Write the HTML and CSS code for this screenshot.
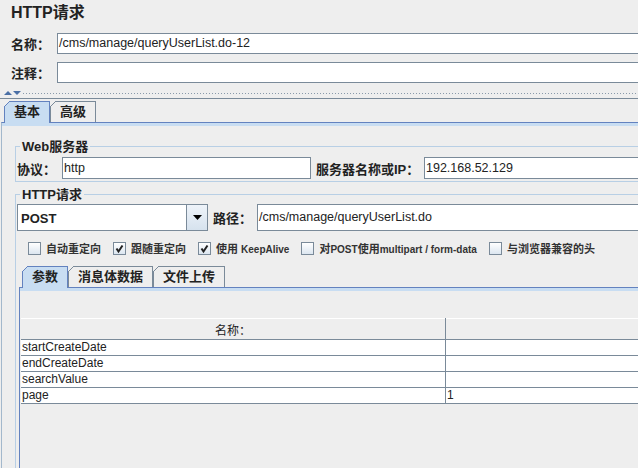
FILE: index.html
```html
<!DOCTYPE html>
<html>
<head>
<meta charset="utf-8">
<link rel="stylesheet" href="styles.css">
</head>
<body>
<div class="root">
  <div class="canvas">
    <div class="head">
      <div class="title">HTTP请求</div>
      <div class="rows">
        <div class="row"><span class="lbl">名称：</span><div class="field">/cms/manage/queryUserList.do-12</div></div>
        <div class="row"><span class="lbl">注释：</span><div class="field"></div></div>
      </div>
    </div>
    <div class="divider">
      <svg class="arrows" width="18" height="6" viewBox="0 0 18 6">
        <polygon points="0,5 4,1 8,5" fill="#4a6fa5"/>
        <polygon points="9,1 17,1 13,5" fill="#4a6fa5"/>
      </svg>
      <div class="dots"></div>
    </div>
    <div class="lower">
      <div class="tabs">
        <div class="tab sel">基本</div>
        <div class="tab">高级</div>
      </div>
      <div class="pane">
        <fieldset class="group web">
          <legend>Web服务器</legend>
          <div class="srow">
            <span class="lbl2">协议：</span>
            <div class="field proto">http</div>
            <span class="lbl3">服务器名称或IP：</span>
            <div class="field grow">192.168.52.129</div>
          </div>
        </fieldset>
        <fieldset class="group http">
          <legend>HTTP请求</legend>
          <div class="crow">
            <div class="combo">
              <span class="combo-text">POST</span>
              <span class="combo-btn"><svg width="9" height="5" viewBox="0 0 9 5"><polygon points="0,0 9,0 4.5,5" fill="#000"/></svg></span>
            </div>
            <span class="lbl4">路径：</span>
            <div class="field grow tall">/cms/manage/queryUserList.do</div>
          </div>
          <div class="checks">
            <div class="chk"><span class="box"></span><span>自动重定向</span></div>
            <div class="chk"><span class="box"><svg width="11" height="11" viewBox="0 0 11 11"><path d="M2.5 5.5 L4.5 8.5 L8.5 2.5" fill="none" stroke="#222" stroke-width="2"/></svg></span><span>跟随重定向</span></div>
            <div class="chk"><span class="box"><svg width="11" height="11" viewBox="0 0 11 11"><path d="M2.5 5.5 L4.5 8.5 L8.5 2.5" fill="none" stroke="#222" stroke-width="2"/></svg></span><span>使用 <span class="lat">KeepAlive</span></span></div>
            <div class="chk"><span class="box"></span><span>对<span class="lat">POST</span>使用<span class="lat">multipart / form-data</span></span></div>
            <div class="chk"><span class="box"></span><span>与浏览器兼容的头</span></div>
          </div>
          <div class="subtabs">
            <div class="tab sub sel">参数</div>
            <div class="tab sub">消息体数据</div>
            <div class="tab sub">文件上传</div>
          </div>
          <div class="subpane">
            <table class="params">
              <thead>
                <tr><th class="c1">名称：</th><th class="c2"></th></tr>
              </thead>
              <tbody>
                <tr><td>startCreateDate</td><td></td></tr>
                <tr><td>endCreateDate</td><td></td></tr>
                <tr><td>searchValue</td><td></td></tr>
                <tr><td>page</td><td>1</td></tr>
              </tbody>
            </table>
          </div>
        </fieldset>
      </div>
    </div>
  </div>
</div>
</body>
</html>
```

FILE: styles.css
```css
html, body {
  margin: 0;
  padding: 0;
  background: #eeeeee;
}
.root {
  width: 638px;
  height: 468px;
  overflow: hidden;
  background: #eeeeee;
  font-family: "Liberation Sans", "Noto Sans CJK SC", sans-serif;
  color: #222;
}
.canvas {
  width: 700px;
  height: 468px;
  display: flex;
  flex-direction: column;
}
.head {
  padding: 4px 0 0 11px;
}
.title {
  font-size: 16px;
  font-weight: bold;
  line-height: 18px;
  height: 18px;
}
.rows {
  margin-top: 11px;
  display: flex;
  flex-direction: column;
  gap: 8px;
}
.row {
  display: flex;
  align-items: center;
  height: 21px;
}
.lbl {
  width: 46px;
  flex: none;
  font-size: 13px;
  font-weight: bold;
}
.field {
  flex: 1;
  height: 21px;
  box-sizing: border-box;
  border: 1px solid #7a8a99;
  background: #fff;
  font-size: 12.5px;
  line-height: 19px;
  padding-left: 1px;
  white-space: nowrap;
  overflow: hidden;
  color: #222;
}
.divider {
  height: 15px;
  display: flex;
  align-items: flex-end;
  padding-bottom: 2px;
  box-sizing: border-box;
}
.arrows {
  flex: none;
  margin-left: 4px;
}
.dots {
  flex: 1;
  height: 4px;
  background-image: radial-gradient(circle, #8a9aaa 0.7px, transparent 0.8px);
  background-size: 3px 3px;
}
.lower {
  flex: 1;
  border-top: 1px solid #7a8a99;
  padding-top: 2px;
  display: flex;
  flex-direction: column;
}
.tabs {
  display: flex;
  padding-left: 4px;
  height: 21px;
  align-items: flex-end;
}
.tab {
  position: relative;
  height: 21px;
  box-sizing: border-box;
  padding: 0 9px;
  border: 1px solid #7a8a99;
  border-bottom: none;
  font-size: 13px;
  font-weight: bold;
  line-height: 20px;
  background: #eeeeee;
  white-space: nowrap;
}
.tab::before {
  content: "";
  position: absolute;
  top: -1px;
  left: -1px;
  width: 7px;
  height: 7px;
  background: linear-gradient(135deg, #eeeeee 0 3.6px, #7a8a99 3.6px 4.8px, transparent 4.8px);
}
.tab.sel {
  background: #c8ddf2;
  border-color: #6382bf;
  height: 22px;
  margin-bottom: -1px;
  z-index: 1;
}
.tab.sel::before {
  background: linear-gradient(135deg, #eeeeee 0 3.6px, #6382bf 3.6px 4.8px, transparent 4.8px);
}
.pane {
  flex: 1;
  border-top: 1px solid #6382bf;
  border-left: 1px solid #a3b8cc;
  margin-left: 1px;
  background: linear-gradient(#c8ddf2, #c8ddf2) top left / 100% 3px no-repeat, #eeeeee;
  padding: 16px 0 0 13px;
  display: flex;
  flex-direction: column;
}
.group {
  margin: 0;
  padding: 0 0 0 1px;
  border: 1px solid #b8cfe5;
  min-width: 0;
}
.group legend {
  font-size: 13px;
  font-weight: bold;
  line-height: 15px;
  padding: 0 2px;
  margin-left: 3px;
}
.web {
  padding-top: 3px;
  padding-bottom: 2px;
}
.srow {
  display: flex;
  align-items: center;
  height: 22px;
}
.lbl2 {
  width: 45px;
  flex: none;
  font-size: 13px;
  font-weight: bold;
}
.field.proto {
  flex: none;
  width: 249px;
  height: 22px;
  line-height: 20px;
}
.lbl3 {
  flex: none;
  width: 108px;
  margin-left: 5px;
  font-size: 13px;
  font-weight: bold;
}
.field.grow {
  height: 22px;
  line-height: 20px;
}
.http {
  margin-top: 5px;
  flex: 1;
  padding-top: 2px;
  display: flex;
  flex-direction: column;
  border-bottom: none;
}
.crow {
  display: flex;
  align-items: center;
  height: 27px;
}
.combo {
  flex: none;
  width: 191px;
  height: 27px;
  box-sizing: border-box;
  border: 1px solid #7a8a99;
  display: flex;
  background: #fff;
}
.combo-text {
  flex: 1;
  font-size: 13px;
  font-weight: bold;
  line-height: 25px;
  padding-left: 2px;
  border: 1px solid #fff;
  border-right: none;
}
.combo-btn {
  flex: none;
  width: 20px;
  border-left: 1px solid #7a8a99;
  background: linear-gradient(#eef3f9, #d6e2ee);
  display: flex;
  align-items: center;
  justify-content: center;
}
.lbl4 {
  flex: none;
  width: 44px;
  margin-left: 5px;
  font-size: 13px;
  font-weight: bold;
}
.field.tall {
  height: 27px;
  line-height: 25px;
}
.checks {
  display: flex;
  gap: 12px;
  padding-left: 11px;
  margin-top: 10px;
  height: 14px;
  align-items: center;
}
.chk {
  display: flex;
  align-items: center;
  gap: 5px;
  font-size: 11px;
  font-weight: bold;
  white-space: nowrap;
  color: #333;
}
.lat {
  font-size: 10px;
}
.box {
  width: 13px;
  height: 13px;
  box-sizing: border-box;
  border: 1px solid #7a8a99;
  background: linear-gradient(#ffffff, #dce6f0);
  display: flex;
  align-items: center;
  justify-content: center;
}
.subtabs {
  display: flex;
  margin-top: 11px;
  padding-left: 5px;
  height: 21px;
  align-items: flex-end;
}
.tab.sub {
  height: 21px;
  padding: 0 9px;
}
.tab.sub.sel {
  height: 22px;
}
.subpane {
  flex: 1;
  margin-left: 2px;
  border-top: 1px solid #6382bf;
  border-left: 1px solid #6382bf;
  background: linear-gradient(#c8ddf2, #c8ddf2) top left / 100% 3px no-repeat, #eeeeee;
  padding: 30px 0 0 1px;
}
.params {
  border-collapse: collapse;
  width: 680px;
  font-size: 12px;
  table-layout: fixed;
}
.params th {
  height: 20px;
  font-weight: normal;
  background: #eeeeee;
  border-top: 1px solid #fff;
  border-bottom: 1px solid #7a8a99;
  padding: 0;
  text-align: center;
}
.params th.c1 {
  width: 424px;
  border-right: 1px solid #7a8a99;
}
.params td {
  height: 15px;
  padding: 0 0 0 1px;
  background: #fff;
  border-bottom: 1px solid #7a8a99;
  line-height: 15px;
  white-space: nowrap;
}
.params td:first-child {
  border-right: 1px solid #7a8a99;
}
```
